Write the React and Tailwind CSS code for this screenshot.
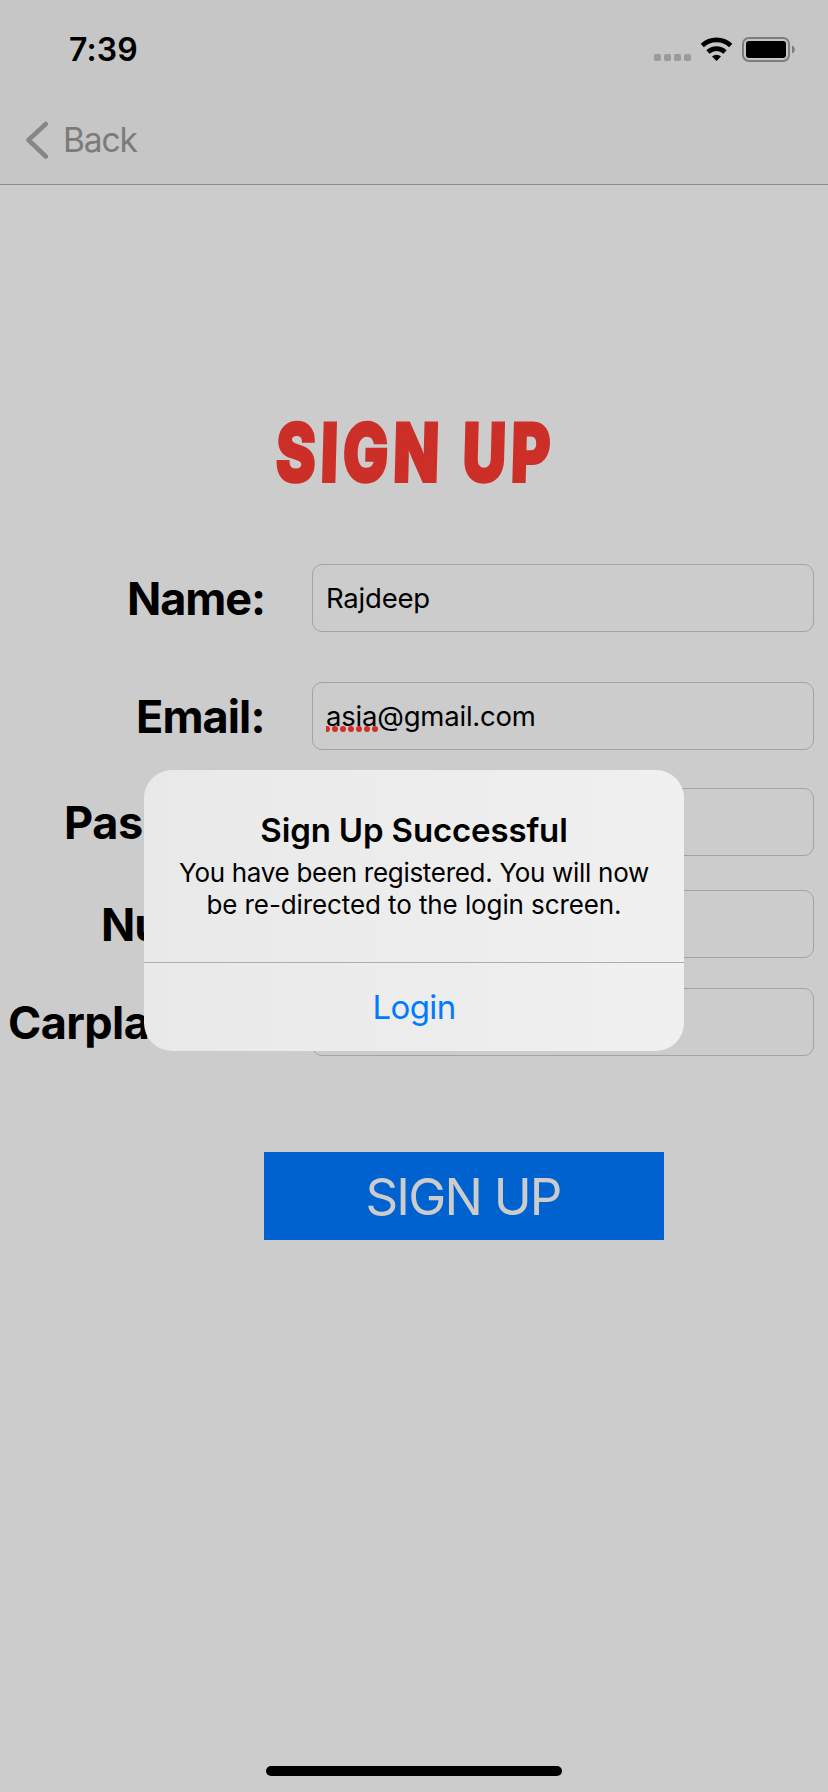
const rows = [
  { label: 'Name:', value: 'Rajdeep', row: 'mt-[67px]', pad: 'pl-[127px]', track: 'tracking-[-1.1px]' },
  { label: 'Email:', misspelt: 'asia', value: '@gmail.com', row: 'mt-[50px]', pad: 'pl-[136px]', track: 'tracking-[-0.9px]' },
  { label: 'Password:', value: '', row: 'mt-[38px]', pad: 'pl-[64px]', track: 'tracking-[-0.3px]' },
  { label: 'Number:', value: '', row: 'mt-[34px]', pad: 'pl-[101px]', track: 'tracking-[-1px]' },
  { label: 'Carplate:', value: '', row: 'mt-[30px]', pad: 'pl-[8px]', track: 'tracking-[-0.6px]' },
];

function StatusBar() {
  return (
    <div className="flex h-[100px] items-start justify-between pl-[69px] pr-[33px]">
      <span className="mt-[30px] text-[32px] leading-[40px] font-semibold tracking-[0.1px]">7:39</span>
      <svg className="mt-[34px] block" width="142" height="32" viewBox="652 34 142 32">
        <g fill="#9b9b9b">
          <rect x="653" y="54" width="7" height="7" rx="1.8" />
          <rect x="663" y="54" width="7" height="7" rx="1.8" />
          <rect x="673" y="54" width="7" height="7" rx="1.8" />
          <rect x="683" y="54" width="7" height="7" rx="1.8" />
        </g>
        <g fill="none" stroke="#000" strokeWidth="4.8">
          <path d="M701.3 45.4 A21 21 0 0 1 729.7 45.4" />
          <path d="M707 52 A12.5 12.5 0 0 1 724 52" />
        </g>
        <path d="M715.5 61 L711 56.4 A6.6 6.6 0 0 1 720 56.4 Z" fill="#000" />
        <rect x="742" y="38" width="46" height="23" rx="6" fill="none" stroke="#7c7c7c" strokeWidth="2" />
        <rect x="745" y="41" width="40" height="17" rx="3" fill="#000" />
        <path d="M791 45.5 C794.7 46.7 794.7 52.3 791 53.5 Z" fill="#7c7c7c" />
      </svg>
    </div>
  );
}

function Field({ label, misspelt, value, row, pad, track }) {
  return (
    <div className={`flex h-[68px] items-center ${row}`}>
      <div className={`w-[312px] shrink-0 pt-[2px] text-[45px] leading-[54px] font-bold whitespace-nowrap ${track} ${pad}`}>{label}</div>
      <div className="flex h-[68px] w-[502px] items-center rounded-[10px] border border-[#a3a3a3] pl-[13px] text-[27.5px] leading-[34px] tracking-[-0.2px]">
        {misspelt && (
          <span className="relative">
            {misspelt}
            <svg className="absolute top-[27px] left-0" width="52" height="6" viewBox="0 0 52 6" fill="#d12f27">
              {[1, 9, 17, 25, 33, 41, 49].map((x) => (
                <circle key={x} cx={x} cy="3" r="3" />
              ))}
            </svg>
          </span>
        )}
        <span>{value}</span>
      </div>
    </div>
  );
}

export default function App() {
  return (
    <div className="relative flex h-[1792px] w-[828px] flex-col overflow-hidden bg-[#cccccc] font-['Inter',sans-serif] text-black">
      <header className="h-[185px] shrink-0 border-b border-[#8b8b8b] bg-[#c6c6c6]">
        <StatusBar />
        <div className="flex h-[80px] items-center pl-[25px] text-[#7b7b7b]">
          <svg width="24" height="40" viewBox="0 0 24 40" fill="none" stroke="#868686" strokeWidth="4.6" strokeLinecap="round" strokeLinejoin="round">
            <path d="M20.8 4 L3.5 20 L20.8 36.5" />
          </svg>
          <span className="ml-[14px] text-[33.5px] leading-[42px] tracking-[-1.1px]">Back</span>
        </div>
      </header>
      <main className="flex flex-col">
        <h1 className="mt-[222px] flex h-[90px] justify-center pl-[4px] text-[79px] leading-[90px] font-extrabold text-[#cc2f27] [-webkit-text-stroke:4px_#cc2f27] [stroke-linejoin:round]">
          <span className="origin-center scale-x-[0.755] -skew-x-2 tracking-[7px] whitespace-nowrap">SIGN UP</span>
        </h1>
        {rows.map((r) => (
          <Field key={r.label} {...r} />
        ))}
        <button className="mt-[96px] ml-[264px] flex h-[88px] w-[400px] items-center justify-center bg-[#0062cf] pt-[2px] pr-[2px] text-[51px] leading-[60px] font-normal tracking-[-1.8px] text-[#cccccc]">SIGN UP</button>
      </main>
      <div className="mt-auto mb-[16px] h-[10px] w-[296px] shrink-0 self-center rounded-full bg-black" />
      <div role="dialog" className="absolute top-[770px] left-[144px] flex h-[281px] w-[540px] flex-col rounded-[28px] bg-linear-to-r from-[#e9e9e9] to-[#f0f0f0] text-center">
        <div className="h-[193px] border-b border-[#adadad] pt-[40px]">
          <h2 className="text-[33px] leading-[40px] font-semibold tracking-[-0.15px] whitespace-nowrap">Sign Up Successful</h2>
          <p className="mt-[7px] text-[26px] leading-[32px] whitespace-nowrap">
            <span className="tracking-[-0.3px]">You have been registered. You will now</span>
            <br />
            <span className="tracking-[-0.1px]">be re-directed to the login screen.</span>
          </p>
        </div>
        <button className="flex h-[88px] items-center justify-center text-[33px] leading-[40px] tracking-[-0.6px] text-[#007aff]">Login</button>
      </div>
    </div>
  );
}
